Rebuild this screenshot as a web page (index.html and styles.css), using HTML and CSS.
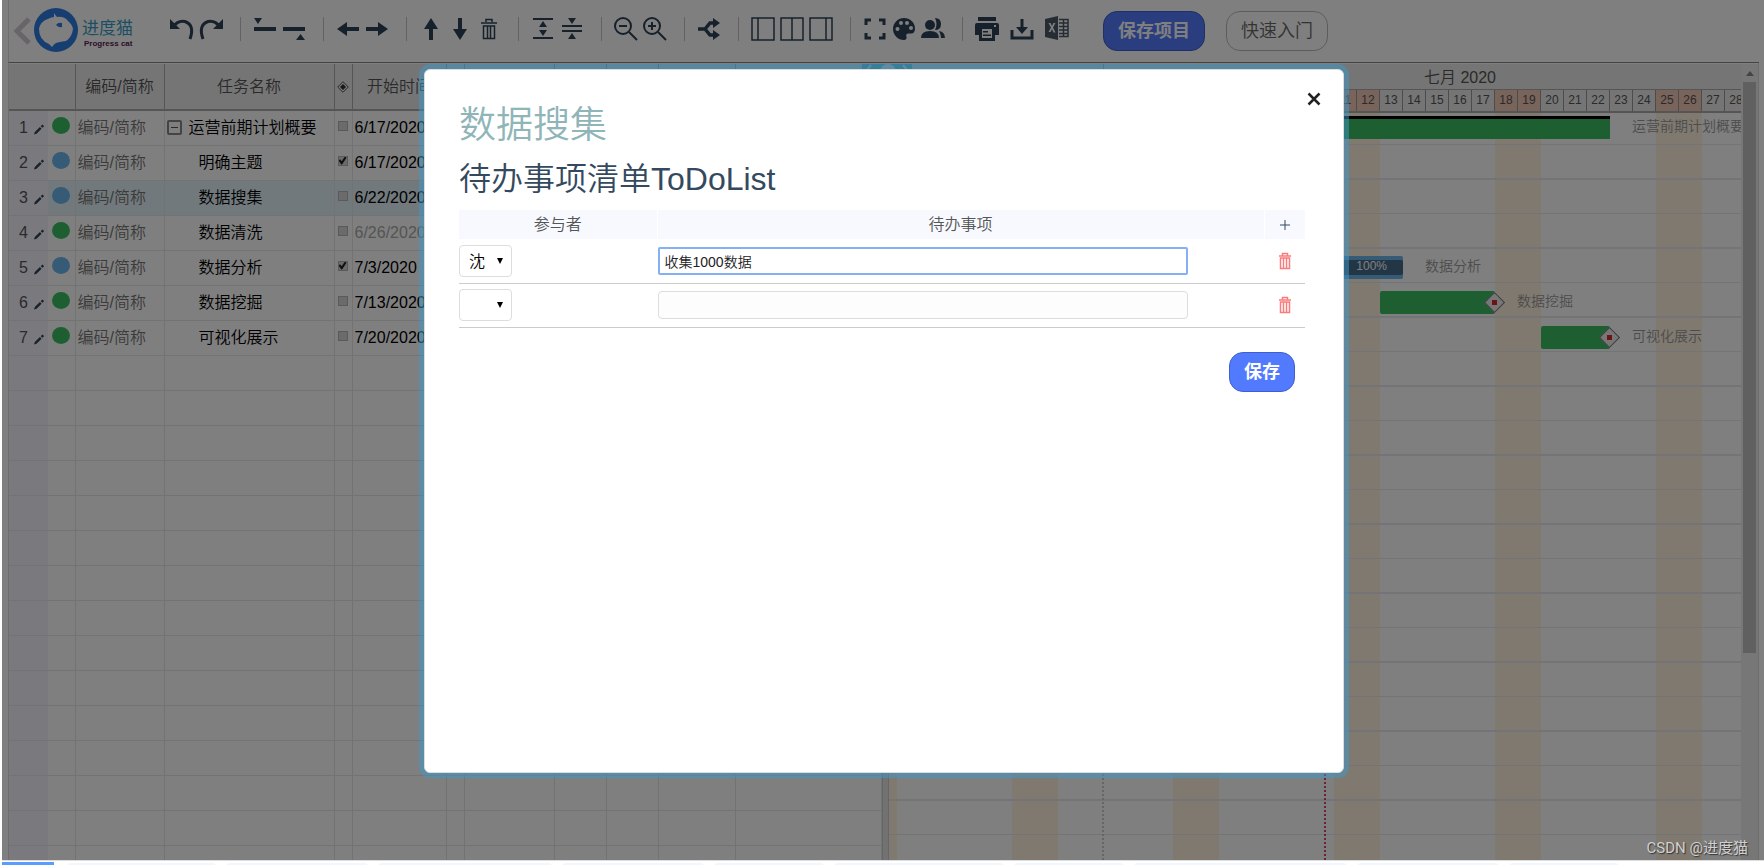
FILE: index.html
```html
<!DOCTYPE html>
<html lang="zh-CN">
<head>
<meta charset="utf-8">
<title>进度猫</title>
<link rel="stylesheet" href="styles.css">
</head>
<body>
<div class="app">
  <header class="toolbar">
    <button class="back" aria-label="返回"><svg width="18" height="28" viewBox="0 0 18 28"><path d="M15 2L3 14l12 12" fill="none" stroke="#cfcad2" stroke-width="5"/></svg></button>
    <div class="brand">
      <svg width="44" height="44" viewBox="0 0 44 44"><circle cx="22" cy="22" r="22" fill="#2f7ce0"/><path d="M20 5q1 2 3 4q7-1 11 4q4 3 5 8q-1 8-7 12q-7 1-10 2q-2 1-4 4q-2-2-3-3Q5 32 5 21Q6 12 20 9z" fill="#fff"/><path d="M22 17q2-3 6-2v4q-3 1-6-2z" fill="#2f7ce0"/></svg>
      <div class="brand-text"><span class="brand-name">进度猫</span><span class="brand-sub">Progress cat</span></div>
    </div>
    <div class="tools">
      <div class="group">
        <button aria-label="撤销"><svg viewBox="0 0 24 24"><path d="M3 10Q8 3 15 4.500Q25 8 20 22" fill="none" stroke="#2e4358" stroke-width="3"/><path d="M0 2v10h10z"/></svg></button>
        <button aria-label="重做"><svg viewBox="0 0 24 24"><path d="M21 10Q16 3 9 4.500Q-1 8 4 22" fill="none" stroke="#2e4358" stroke-width="3"/><path d="M24 2v10H14z"/></svg></button>
      </div>
      <div class="group">
        <button aria-label="上方插入"><svg viewBox="0 0 24 24"><path d="M1 1h8L5 7zM1 10h22v4H1z"/></svg></button>
        <button aria-label="下方插入"><svg viewBox="0 0 24 24"><path d="M1 10h22v4H1zM14 23h9l-4.500-6z"/></svg></button>
      </div>
      <div class="group">
        <button aria-label="升级"><svg viewBox="0 0 24 24"><path d="M1 12l10-7v5h12v4H11v5z"/></svg></button>
        <button aria-label="降级"><svg viewBox="0 0 24 24"><path d="M23 12l-10-7v5H1v4h12v5z"/></svg></button>
      </div>
      <div class="group">
        <button aria-label="上移"><svg viewBox="0 0 24 24"><path d="M12 1l7 11h-5v11h-4V12H5z"/></svg></button>
        <button aria-label="下移"><svg viewBox="0 0 24 24"><path d="M12 23l7-11h-5V1h-4v11H5z"/></svg></button>
        <button aria-label="删除"><svg viewBox="0 0 24 24"><path d="M4 6h16M9 5V2.500h6V5M6.500 9v12.500h11V9zM10.500 9v12M13.500 9v12" class="line thin"/></svg></button>
      </div>
      <div class="group">
        <button aria-label="展开"><svg viewBox="0 0 24 24"><path d="M2 1h20v2H2zM2 20h20v2H2zM12 4l4 6H8zM12 19l4-6H8z"/></svg></button>
        <button aria-label="收起"><svg viewBox="0 0 24 24"><path d="M2 8h20v2H2zM2 13h20v2H2zM12 7l4-6H8zM12 16l4 6H8z"/></svg></button>
      </div>
      <div class="group">
        <button aria-label="缩小"><svg viewBox="0 0 24 24"><path d="M15 15l8 8M5 9h8" class="line"/><circle cx="9" cy="9" r="8" class="line"/></svg></button>
        <button aria-label="放大"><svg viewBox="0 0 24 24"><path d="M15 15l8 8M5 9h8M9 5v8" class="line"/><circle cx="9" cy="9" r="8" class="line"/></svg></button>
      </div>
      <div class="group">
        <button aria-label="关联"><svg viewBox="0 0 24 24"><path d="M1 12h7l5-6h5M8 12l5 6h5" fill="none" stroke="#2e4358" stroke-width="3.500"/><path d="M16 1l7 5-7 5zM16 13l7 5-7 5z"/></svg></button>
      </div>
      <div class="group">
        <button aria-label="左栏"><svg viewBox="0 0 24 24"><path d="M1 1h22v22H1zM7 1v22" class="line thin"/></svg></button>
        <button aria-label="双栏"><svg viewBox="0 0 24 24"><path d="M1 1h22v22H1zM12 1v22" class="line thin"/></svg></button>
        <button aria-label="右栏"><svg viewBox="0 0 24 24"><path d="M1 1h22v22H1zM17 1v22" class="line thin"/></svg></button>
      </div>
      <div class="group">
        <button aria-label="全屏"><svg viewBox="0 0 24 24"><path d="M3 8V3h5M16 3h5v5M21 16v5h-5M8 21H3v-5" fill="none" stroke="#2e4358" stroke-width="3"/></svg></button>
        <button aria-label="配色"><svg viewBox="0 0 24 24"><path fill-rule="evenodd" d="M12 1a11 11 0 0 0 0 22c2 0 3-1.500 2.500-3-.800-2 0-3.500 2-3.500h3c2 0 3.500-2 3.500-5C23 5.500 18 1 12 1zM5.500 10a2 2 0 1 1 0 4 2 2 0 0 1 0-4zM9 4a2 2 0 1 1 0 4 2 2 0 0 1 0-4zM15 4a2 2 0 1 1 0 4 2 2 0 0 1 0-4zM19 9a2 2 0 1 1 0 4 2 2 0 0 1 0-4z"/></svg></button>
        <button aria-label="成员"><svg viewBox="0 0 24 24"><circle cx="9" cy="8" r="5"/><path d="M0 21q0-7 9-7t9 7zM14 1q6 0 6 6t-6 6q3-6 0-12zM18 14q6 1 6 7h-4q0-4-2-7z"/></svg></button>
      </div>
      <div class="group group-wide">
        <button aria-label="打印"><svg viewBox="0 0 24 24"><path fill-rule="evenodd" d="M3 0h18v4H3zM2 6h20q2 0 2 2v10h-4v6H4v-6H0V8q0-2 2-2zM7 12v9h10v-9zM19 8v2h2V8zM8 14h5v1.500H8zM8 17.500h8V19H8z"/></svg></button>
        <button aria-label="下载"><svg viewBox="0 0 24 24"><path d="M2 13v8h20v-8" fill="none" stroke="#2e4358" stroke-width="3"/><path d="M10.500 2h3v8H18l-6 7-6-7h4.500z"/></svg></button>
        <button aria-label="导出 Excel"><svg viewBox="0 0 24 24" class="excel"><path fill-rule="evenodd" d="M0 2l13-3v24L0 20zM3.500 6l2.500 4.500L3.500 15h2L7 12l1.500 3.500h2L8 10.500 10.500 6h-2L7 9 5.500 6z"/><path d="M14 2.500h9v17h-9M14 6h9M14 9.500h9M14 13h9M14 16.500h9M18.500 3v17" fill="none" stroke="#4a5868" stroke-width="1.500"/></svg></button>
      </div>
    </div>
    <button class="btn btn-primary">保存项目</button>
    <button class="btn btn-plain">快速入门</button>
  </header>

  <main class="workspace">
    <section class="grid">
      <table class="tasks">
        <colgroup><col class="c-num"><col class="c-dot"><col class="c-code"><col class="c-name"><col class="c-thin"><col class="c-date"><col class="c-thin"><col class="c-end"><col class="c-small"><col class="c-small"><col class="c-mid"><col></colgroup>
        <thead><tr><th colspan="2"></th><th>编码/简称</th><th>任务名称</th><th><svg class="milestone" width="12" height="12" viewBox="0 0 12 12"><path d="M6 .700L11.300 6 6 11.300.700 6z" fill="none" stroke="#555"/><path d="M6 3l3 3-3 3-3-3z" fill="#333"/></svg></th><th>开始时间</th><th></th><th></th><th></th><th></th><th></th><th></th></tr></thead>
        <tbody id="rows"></tbody>
      </table>
    </section>
    <div class="splitter"></div>
    <section class="gantt">
      <div class="canvas">
        <div class="months"><div class="month month-june"></div><div class="month month-july">七月 2020</div></div>
        <div class="days" id="days"></div>
        <div class="chart">
          <div class="stripes" id="stripes"></div>
          <div class="lines"></div>
          <div class="month-line"></div>
          <div class="today-line"></div>
          <div class="bar bar-summary"></div><span class="label label-summary">运营前期计划概要</span>
          <div class="bar bar-analysis"><div class="progress">100%</div></div><span class="label label-analysis">数据分析</span>
          <div class="bar bar-mining"><i class="end"></i></div><span class="label label-mining">数据挖掘</span>
          <div class="bar bar-show"><i class="end"></i></div><span class="label label-show">可视化展示</span>
        </div>
      </div>
    </section>
    <div class="scrollbar"><span class="scroll-up"></span><span class="scroll-thumb"></span></div>
    <div class="nav-tab"><svg width="50" height="20" viewBox="0 0 50 20"><path d="M9 1L4 7l5 6M41 1l5 6-5 6" fill="none" stroke="#fff" stroke-width="2"/><circle cx="26" cy="8" r="8" fill="#fff"/></svg></div>
  </main>

  <div class="overlay">
    <section class="modal" role="dialog" aria-labelledby="dlg-title">
      <button class="close" aria-label="关闭"><svg width="14" height="14" viewBox="0 0 14 14"><path d="M1.500 1.500l11 11M12.500 1.500l-11 11" stroke="#222" stroke-width="2.500"/></svg></button>
      <h1 id="dlg-title">数据搜集</h1>
      <h2>待办事项清单ToDoList</h2>
      <table class="todo">
        <colgroup><col class="t-who"><col><col class="t-act"></colgroup>
        <thead><tr><th>参与者</th><th>待办事项</th><th><button class="icon-btn" aria-label="添加"><svg width="10" height="10" viewBox="0 0 10 10"><path d="M5 0v10M0 5h10" stroke="#34495e"/></svg></button></th></tr></thead>
        <tbody>
          <tr>
            <td><span class="pick"><select aria-label="参与者 1"><option>沈</option></select></span></td>
            <td><input class="focused" type="text" aria-label="待办事项 1" value="收集1000数据"></td>
            <td><button class="icon-btn" aria-label="删除 1"><svg width="14" height="18" viewBox="0 0 14 18"><path d="M1 4h12M4.500 3.500v-2h5v2M2.500 6v10.500h9V6zM5.500 6v10M8.500 6v10"/></svg></button></td>
          </tr>
          <tr>
            <td><span class="pick"><select aria-label="参与者 2"><option></option></select></span></td>
            <td><input type="text" aria-label="待办事项 2"></td>
            <td><button class="icon-btn" aria-label="删除 2"><svg width="14" height="18" viewBox="0 0 14 18"><path d="M1 4h12M4.500 3.500v-2h5v2M2.500 6v10.500h9V6zM5.500 6v10M8.500 6v10"/></svg></button></td>
          </tr>
        </tbody>
      </table>
      <div class="actions"><button class="btn btn-primary">保存</button></div>
    </section>
  </div>
  <div class="watermark">CSDN @进度猫</div>
</div>
<footer class="tabs" id="tabs"></footer>
<script src="app.js"></script>
</body>
</html>
```
FILE: styles.css
```css
* { box-sizing: border-box; }
body {
  margin: 0;
  height: 100vh;
  display: flex;
  flex-direction: column;
  overflow: hidden;
  padding-left: 2px;
  background: #fff;
  color: #000;
  font: 350 16px/20px "Liberation Sans", "Noto Sans CJK SC", sans-serif;
}
button, input, select { font: inherit; color: inherit; }
button { padding: 0; border: 0; background: none; cursor: pointer; }
svg { display: block; }
table { border-collapse: collapse; table-layout: fixed; width: 100%; }
th { font-weight: inherit; }

.app {
  position: relative;
  flex: 1;
  min-height: 0;
  display: flex;
  flex-direction: column;
  padding: 0 5px 0 6px;
  background: #fff;
}

/* toolbar */
.toolbar {
  display: flex;
  align-items: center;
  flex: none;
  height: 63px;
  padding: 0 0 1px 5px;
  border-left: 1px solid #ddd;
  border-bottom: 1px solid #888;
}
.brand { display: flex; align-items: center; gap: 4px; width: 136px; margin-left: 2px; padding-bottom: 2px; }
.brand-text { display: flex; flex-direction: column; color: #37a0c8; padding-top: 8px; }
.brand-name { font-size: 17px; line-height: 20px; font-weight: 400; }
.brand-sub { font-size: 8px; line-height: 10px; font-weight: 700; color: #5c2050; padding-left: 2px; }
.tools { display: flex; align-items: center; height: 24px; margin-bottom: 3px; }
.group { display: flex; align-items: center; gap: 5px; height: 24px; }
.group + .group { margin-left: 17px; padding-left: 12px; border-left: 1px solid #c4c4c4; }
.group.group-wide { gap: 11px; }
.group svg { width: 24px; height: 24px; fill: #2e4358; overflow: visible; }
.group svg .line { fill: none; stroke: #2e4358; stroke-width: 2; }
.group svg .thin { stroke-width: 1.500; }
.group svg.excel { fill: #4a5868; }
.btn {
  height: 40px;
  padding: 0 14px;
  border: 1px solid #bbb;
  border-radius: 14px;
  font-size: 18px;
  line-height: 38px;
  white-space: nowrap;
}
.btn-primary { background: #527aff; border-color: #3f60cc; color: #fff; font-weight: 700; }
.toolbar .btn { margin-left: 21px; }
.toolbar .btn-primary { margin-left: 34px; }
.btn-plain { color: #666; }

/* workspace */
.workspace {
  position: relative;
  display: flex;
  flex: 1;
  min-height: 0;
  overflow: hidden;
  padding-top: 1px;
  border-left: 1px solid #ddd;
  border-right: 1px solid #ddd;
}
.grid { flex: none; width: 873px; overflow: hidden; }
.c-num { width: 39px; }
.c-dot { width: 27px; }
.c-code { width: 89px; }
.c-name { width: 170px; }
.c-thin { width: 18px; }
.c-date { width: 94px; }
.c-end { width: 90px; }
.c-small { width: 52px; }
.c-mid { width: 77px; }
.tasks th {
  height: 46px;
  padding: 0;
  background: #ebebeb;
  border-right: 1px solid #aaa;
  border-bottom: 2px solid #aaa;
  color: #555;
}
.tasks td {
  height: 35px;
  padding: 0 2px;
  border-right: 1px solid #e6e6e6;
  border-bottom: 1px solid #e6e6e6;
  white-space: nowrap;
  overflow: hidden;
}
.tasks td.num { background: #f4f3fd; border-right: 0; padding: 0 4px 0 10px; color: #555; }
.tasks td.dot-cell { padding: 0 4px; }
.tasks td.code { color: #777; }
.num-in { display: flex; align-items: center; gap: 6px; }
.num-in svg { margin-top: 4px; }
.dot { display: block; width: 18px; height: 17px; margin-bottom: 4px; border-radius: 50%; background: #3cbf64; }
.dot.blue { background: #6cb6ec; }
.name-in { display: flex; align-items: center; padding-left: 32px; }
.name-in.parent { gap: 7px; padding-left: 0; }
.minus { width: 15px; height: 15px; border: 2px solid #888; border-radius: 2px; padding: 5px 2px; }
.minus::after { content: ""; display: block; height: 1px; background: #555; }
.selected td { background: #e3f2f8; }
.selected td.num { background: #f4f3fd; }
.tick {
  appearance: none;
  display: block;
  width: 10px;
  height: 10px;
  margin: 0 0 4px 3px;
  background: #d6d6d6;
  border: 1px solid #b4b4b4;
}
.tasks .tick-cell { padding: 0; }
.tick:checked::before {
  content: "";
  display: block;
  height: 8px;
  background: #222;
  clip-path: polygon(0 50%, 20% 35%, 40% 60%, 80% 0, 100% 15%, 45% 100%, 35% 100%);
}
.tasks .muted { color: #aaa; }
.milestone { margin: 0 auto; }
.splitter { flex: none; width: 7px; background: #e4e4e4; border: solid #ccc; border-width: 0 1px; }

/* gantt */
.gantt { flex: 1; min-width: 0; overflow: hidden; }
.canvas { width: 874px; height: 100%; margin-left: -15px; display: flex; flex-direction: column; }
.months, .days { display: flex; flex: none; background: #ebebeb; color: #555; }
.months { height: 26px; border-bottom: 1px solid #aaa; line-height: 28px; }
.month { text-align: center; border-right: 1px solid #aaa; flex: none; }
.month-june { width: 230px; }
.month-july { width: 713px; }
.days { height: 23px; border-bottom: 2px solid #aaa; font-size: 12px; line-height: 20px; }
.day { flex: none; width: 23px; text-align: center; border-right: 1px solid #999; }
.day.off { background: #f2c8b8; }
.chart { position: relative; flex: 1; overflow: hidden; }
.stripes { position: absolute; inset: 0; display: flex; }
.stripe { flex: none; width: 23px; }
.stripe.off { background: #fff3e0; }
.lines {
  position: absolute;
  inset: 0;
  background: repeating-linear-gradient(transparent 0 31px, #e8e8ec 31px 32px, transparent 32px 65px, #e8e8ec 65px 67px, transparent 67px 69px);
}
.month-line, .today-line { position: absolute; top: 0; bottom: 0; }
.month-line { left: 228px; border-left: 2px dotted #ccc; }
.today-line { left: 450px; border-left: 2px dotted #d8486a; }
.bar { position: absolute; height: 23px; border-radius: 2px; background: #3cbf64; }
.bar-summary { top: 3px; left: 0; width: 736px; border-top: 3px solid #000; border-radius: 0; }
.bar-analysis { top: 143px; left: 276px; width: 253px; padding: 4px 0; background: #6cb6ec; }
.bar-mining { top: 178px; left: 506px; width: 115px; }
.bar-show { top: 213px; left: 667px; width: 69px; }
.progress { height: 15px; padding-right: 16px; border-radius: 2px; background: #446c8c; color: #fff; font-size: 12px; line-height: 13px; text-align: right; }
.end {
  position: absolute;
  right: -7px;
  top: 4px;
  width: 15px;
  height: 15px;
  transform: rotate(45deg);
  border: 1px solid #777;
  background: #eee;
  padding: 4px;
}
.end::after { content: ""; display: block; height: 5px; background: #d62828; transform: rotate(45deg); }
.label { position: absolute; font-size: 14px; color: #999; white-space: nowrap; }
.label-summary { top: 3px; left: 758px; }
.label-analysis { top: 143px; left: 551px; }
.label-mining { top: 178px; left: 643px; }
.label-show { top: 213px; left: 758px; }
.scrollbar { flex: none; width: 17px; padding: 7px 2px; background: #eee; display: flex; flex-direction: column; align-items: center; gap: 6px; }
.scroll-up { border: solid transparent; border-width: 0 4px 5px; border-bottom-color: #888; }
.scroll-thumb { width: 13px; flex: 0 0 73%; background: #c1c1c1; }
.nav-tab { position: absolute; left: 853px; top: 1px; width: 50px; background: #5cc4dc; }

/* dialog */
.overlay {
  position: absolute;
  inset: 0;
  display: flex;
  justify-content: center;
  padding: 69px 0 87px 2px;
  background: rgba(0, 0, 0, 0.5);
}
.modal {
  position: relative;
  width: 920px;
  padding: 29px 38px 29px 34px;
  background: #fff;
  border: 1px solid #ddd;
  border-radius: 6px;
  box-shadow: 0 0 0 5px rgba(63, 153, 203, 0.5);
}
.close { position: absolute; top: 22px; right: 22px; }
h1, h2 { margin: 0; font-weight: 350; }
h1 { font-size: 37px; line-height: 54px; color: #8fb5b8; }
h2 { font-size: 32px; line-height: 48px; color: #34495e; margin: 2px 0 7px; }
.t-who { width: 198px; }
.t-act { width: 41px; }
.todo th { height: 29px; padding: 0; background: #f7f9ff; color: #555; border-right: 1px solid #fff; }
.todo td { height: 44px; padding: 0; border-bottom: 1px solid #ccc; border-right: 1px solid #fff; }
.todo td:last-child, .todo th:last-child { border-right: 0; }
.icon-btn { display: block; margin: 0 auto; }
.icon-btn path { fill: none; }
.todo td .icon-btn path { stroke: #fb7b7b; stroke-width: 1.500; }
.pick { position: relative; display: block; width: 53px; height: 32px; }
.pick select { appearance: none; width: 100%; height: 100%; padding: 2px 0 0 9px; border: 1px solid #ddd; border-radius: 4px; background: #fff; }
.pick::after { content: ""; position: absolute; right: 9px; top: 13px; border: solid transparent; border-width: 6px 3px 0; border-top-color: #000; pointer-events: none; }
.todo input { display: block; width: 530px; height: 28px; padding: 0 5px; border: 1px solid #ddd; border-radius: 4px; background: #fdfdfd; font-size: 14px; color: #222; }
.todo input.focused { border: 2px solid #86b0f4; border-radius: 2px; background: #fff; }
.actions { display: flex; justify-content: flex-end; padding: 24px 10px 0 0; }
.watermark { position: absolute; right: 16px; bottom: 2px; font: 400 15px/20px Roboto, "Noto Sans CJK SC", sans-serif; color: #d0d0d0; text-shadow: 1px 1px 1px #333; }

/* sheet tabs */
.tabs { flex: none; display: flex; gap: 10px; height: 5px; padding-top: 2px; overflow: hidden; border-top: 1px solid #ddd; }
.tab { flex: none; height: 8px; border-radius: 4px; background: #f0f7ff; }
.tab.active { margin: -1px 3px 0 0; border-radius: 0; background: #5a9cff; }
```
FILE: app.js
```javascript
const tasks = [
  ["运营前期计划概要", "6/17/2020", "green", false],
  ["明确主题", "6/17/2020", "blue", true],
  ["数据搜集", "6/22/2020", "blue", false],
  ["数据清洗", "6/26/2020", "green", false],
  ["数据分析", "7/3/2020", "blue", true],
  ["数据挖掘", "7/13/2020", "green", false],
  ["可视化展示", "7/20/2020", "green", false],
];
const pencil = '<svg width="11" height="11" viewBox="0 0 12 12"><path d="M0 12l1-3 6-6 2 2-6 6zM8 2l2-2 2 2-2 2z" fill="#2e4358"/></svg>';
const rest = "<td></td>".repeat(6);
let html = "";
tasks.forEach(([name, date, color, done], i) => {
  const label = i === 0
    ? `<div class="name-in parent"><span class="minus"></span>${name}</div>`
    : `<div class="name-in">${name}</div>`;
  html += `<tr class="${i === 2 ? "selected" : ""}"><td class="num"><div class="num-in">${i + 1}${pencil}</div></td>
    <td class="dot-cell"><span class="dot ${color}"></span></td><td class="code">编码/简称</td><td>${label}</td>
    <td class="tick-cell"><input type="checkbox" class="tick" aria-label="里程碑 ${i + 1}" ${done ? "checked" : ""}></td>
    <td class="${i === 3 ? "muted" : ""}">${date}</td>${rest}</tr>`;
});
for (let i = 0; i < 24; i++) {
  html += `<tr><td class="num"></td><td></td><td></td><td></td><td></td><td></td>${rest}</tr>`;
}
document.getElementById("rows").innerHTML = html;

let days = "";
let stripes = "";
for (let i = 0; i < 38; i++) {
  const date = new Date(2020, 5, 21 + i);
  const off = date.getDay() % 6 === 0 ? " off" : "";
  days += `<div class="day${off}">${date.getDate()}</div>`;
  stripes += `<div class="stripe${off}"></div>`;
}
document.getElementById("days").innerHTML = days;
document.getElementById("stripes").innerHTML = stripes;

const widths = [52, 149, 142, 174, 142, 110, 170, 110, 213, 142, 110];
document.getElementById("tabs").innerHTML = widths
  .map((w, i) => `<div class="tab${i === 0 ? " active" : ""}" style="width:${w}px"></div>`)
  .join("");
```
